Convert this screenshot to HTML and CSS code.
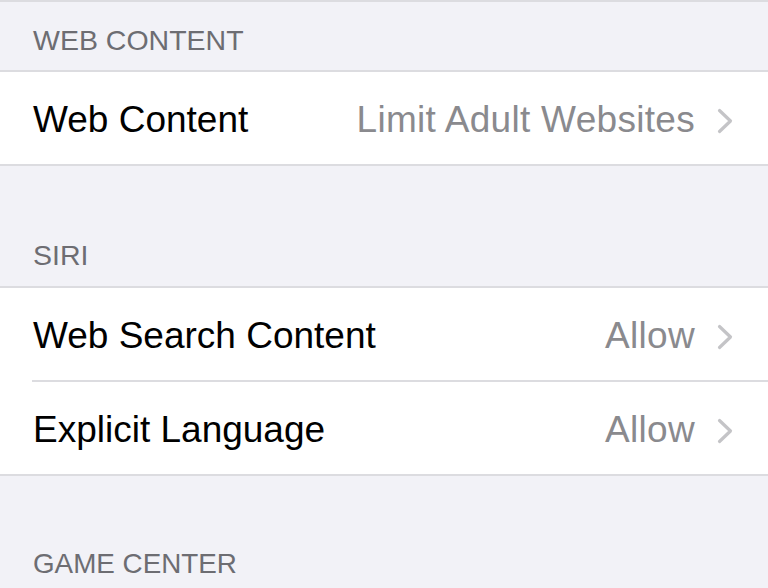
FILE: index.html
```html
<!DOCTYPE html>
<html>
<head>
<meta charset="utf-8">
<link rel="stylesheet" href="styles.css">
</head>
<body>
<div class="page">
  <div class="header first">WEB CONTENT</div>
  <div class="group">
    <div class="row">
      <span class="label">Web Content</span>
      <span class="value">Limit Adult Websites</span>
      <svg class="chev" width="16" height="26" viewBox="0 0 16 26"><path d="M2.5 2.5 L13.5 13 L2.5 23.5" fill="none" stroke="#c4c4c7" stroke-width="3.2" stroke-linecap="round" stroke-linejoin="round"/></svg>
    </div>
  </div>
  <div class="header tall">SIRI</div>
  <div class="group">
    <div class="row">
      <span class="label">Web Search Content</span>
      <span class="value">Allow</span>
      <svg class="chev" width="16" height="26" viewBox="0 0 16 26"><path d="M2.5 2.5 L13.5 13 L2.5 23.5" fill="none" stroke="#c4c4c7" stroke-width="3.2" stroke-linecap="round" stroke-linejoin="round"/></svg>
    </div>
    <div class="inset"></div>
    <div class="row">
      <span class="label">Explicit Language</span>
      <span class="value">Allow</span>
      <svg class="chev" width="16" height="26" viewBox="0 0 16 26"><path d="M2.5 2.5 L13.5 13 L2.5 23.5" fill="none" stroke="#c4c4c7" stroke-width="3.2" stroke-linecap="round" stroke-linejoin="round"/></svg>
    </div>
  </div>
  <div class="header last">GAME CENTER</div>
</div>
</body>
</html>
```
FILE: styles.css
```css
html, body {
  margin: 0;
  padding: 0;
  background: #f2f2f7;
}
body {
  font-family: "Liberation Sans", Arial, sans-serif;
  width: 768px;
  height: 588px;
  overflow: hidden;
}
.page {
  display: flex;
  flex-direction: column;
  border-top: 2px solid #dcdce0;
}
.header {
  color: #6d6d72;
  font-size: 28.5px;
  line-height: 34px;
  padding-left: 33px;
  box-sizing: border-box;
  display: flex;
  align-items: flex-end;
  padding-bottom: 13px;
}
.header.first {
  height: 68px;
}
.header.tall {
  height: 120px;
  padding-bottom: 14px;
}
.header.last {
  padding-top: 71px;
  padding-bottom: 0;
  font-size: 27.8px;
}
.group {
  background: #ffffff;
  border-top: 2px solid #dcdce0;
  border-bottom: 2px solid #dcdce0;
  display: flex;
  flex-direction: column;
}
.row {
  height: 92px;
  box-sizing: border-box;
  padding: 26px 35px 22px 33px;
  display: flex;
  align-items: flex-start;
  font-size: 37px;
  line-height: 44px;
}
.label {
  color: #000000;
  flex: 1;
}
.value {
  color: #8a8a8e;
  letter-spacing: 0.3px;
}
.chev {
  margin-left: 22px;
  margin-top: 10px;
}
.inset {
  height: 2px;
  margin-left: 32px;
  background: #dcdce0;
}
```
